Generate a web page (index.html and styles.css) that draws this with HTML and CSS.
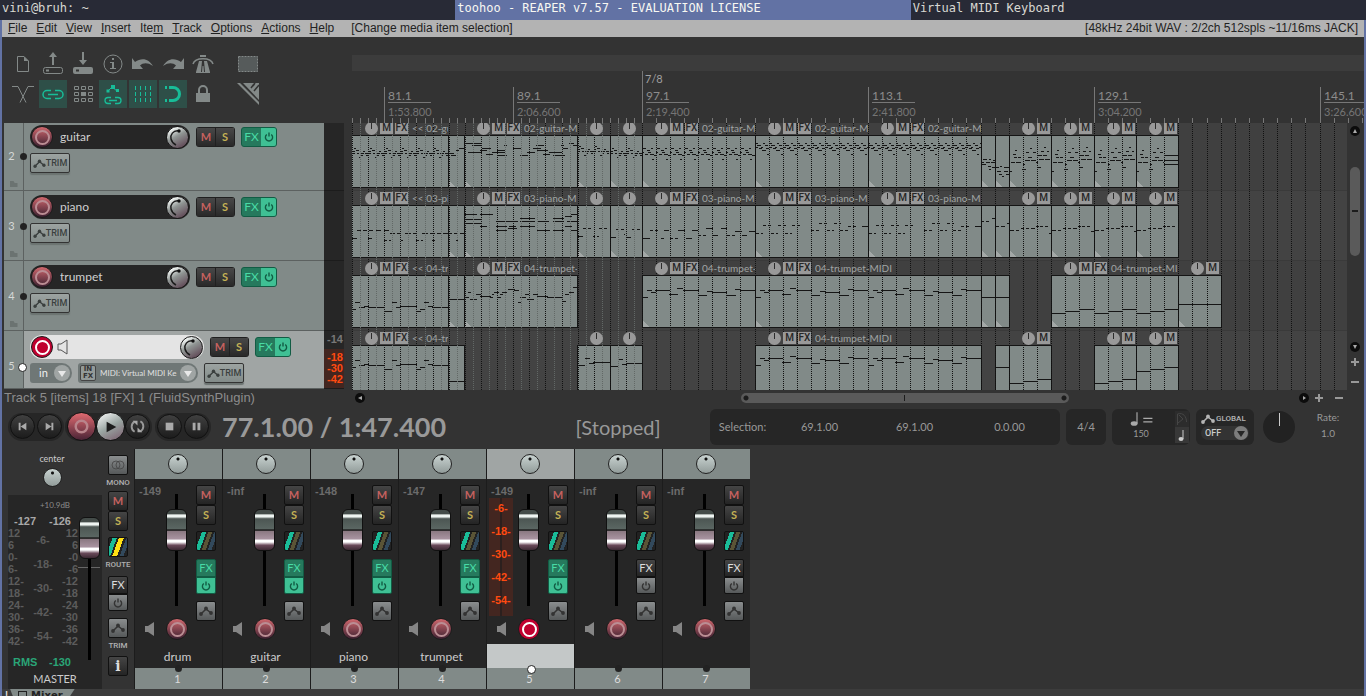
FILE: index.html
```html
<!DOCTYPE html>
<html lang="en">
<head>
<meta charset="utf-8">
<title>toohoo - REAPER v7.57 - EVALUATION LICENSE</title>
<link rel="stylesheet" href="styles.css">
</head>
<body>
<header class="wm-tabs">
  <span class="wm-tab">vini@bruh: ~</span>
  <span class="wm-tab wm-tab--active">toohoo - REAPER v7.57 - EVALUATION LICENSE</span>
  <span class="wm-tab">Virtual MIDI Keyboard</span>
</header>
<main class="app">
  <nav class="menubar">
    <a href="#file"><u>F</u>ile</a><a href="#edit"><u>E</u>dit</a><a href="#view"><u>V</u>iew</a><a href="#insert"><u>I</u>nsert</a><a href="#item">Ite<u>m</u></a><a href="#track"><u>T</u>rack</a><a href="#options"><u>O</u>ptions</a><a href="#actions"><u>A</u>ctions</a><a href="#help"><u>H</u>elp</a>
    <span class="menubar__action">[Change media item selection]</span>
    <span class="menubar__device">[48kHz 24bit WAV : 2/2ch 512spls ~11/16ms JACK]</span>
  </nav>

  <section class="upper">
    <div class="toolbar">
      <div class="toolbar__row">
        <button class="tool" aria-label="New project"><svg viewBox="0 0 28 28"><path d="M8.500 6.500h6.500l4.500 4.500v10.500h-11z" fill="none" stroke="currentColor"/><path d="M15 6.500v4.500h4.500z" fill="currentColor"/></svg></button>
        <button class="tool" aria-label="Open project"><svg viewBox="0 0 28 28"><rect x="4.500" y="17.500" width="19" height="6" rx="2" fill="none" stroke="currentColor"/><path d="M7 19.500h3v2h-3zM13 15V7h-3l4-5 4 5h-3v8z" fill="currentColor"/></svg></button>
        <button class="tool" aria-label="Save project"><svg viewBox="0 0 28 28"><rect x="4" y="17" width="20" height="7" rx="2" fill="currentColor"/><path d="M7 19.500h3v2h-3z" fill="#333"/><path d="M13 2h2v8h3l-4 5-4-5h3z" fill="currentColor"/></svg></button>
        <button class="tool" aria-label="Project settings"><svg viewBox="0 0 28 28"><circle cx="14" cy="14" r="9" fill="none" stroke="currentColor"/><path d="M13 8h2v2h-2zM11 12h4v6h2v1h-6v-1h2v-5h-2z" fill="currentColor"/></svg></button>
        <button class="tool" aria-label="Undo"><svg viewBox="0 0 28 28"><path d="M3 8l3 4c7-5 14-3 18 4-6-4-10-3-13-.5L14 19H3z" fill="currentColor"/></svg></button>
        <button class="tool" aria-label="Redo"><svg viewBox="0 0 28 28"><path d="M25 8l-3 4c-7-5-14-3-18 4 6-4 10-3 13-.5L14 19h11z" fill="currentColor"/></svg></button>
        <button class="tool" aria-label="Metronome"><svg viewBox="0 0 28 28"><path d="M11 5h6v2h-6zM10 11h3l-1 11h1l.5-6h1l.5 6h1l-1-11h3l3 11v1H7v-1z" fill="currentColor"/><path d="M4 14c2-7 18-7 20 0" fill="none" stroke="currentColor" stroke-width="1.500"/></svg></button>
        <button class="tool tool--apart" aria-label="Marquee selection"><svg viewBox="0 0 28 28"><rect x="4.500" y="6.500" width="19" height="15" fill="#565b5b" stroke="currentColor" stroke-dasharray="2 1"/></svg></button>
      </div>
      <div class="toolbar__row">
        <button class="tool" aria-label="Auto-crossfade"><svg viewBox="0 0 28 28"><path d="M3 6.500h6l8 16M25 6.500h-6l-8 16" fill="none" stroke="currentColor"/></svg></button>
        <button class="tool tool--on" aria-label="Item grouping"><svg viewBox="0 0 28 28"><path d="M12 10.500H8a4 4 0 0 0 0 8h4M16 10.500h4a4 4 0 0 1 0 8h-4M9 14.500h10" fill="none" stroke="currentColor" stroke-width="1.500"/></svg></button>
        <button class="tool" aria-label="Ripple editing"><svg viewBox="0 0 28 28"><g fill="none" stroke="currentColor"><path d="M5.500 6.500h4v3h-4zM12.500 6.500h4v3h-4zM19.500 6.500h4v3h-4zM5.500 12.500h4v3h-4zM19.500 12.500h4v3h-4zM5.500 18.500h4v3h-4zM12.500 18.500h4v3h-4zM19.500 18.500h4v3h-4z"/></g><path d="M12 12h5v4h-5z" fill="currentColor"/></svg></button>
        <button class="tool tool--on" aria-label="Move envelopes"><svg viewBox="0 0 28 28"><path d="M9 11l4-4 5 4" fill="none" stroke="currentColor"/><path d="M7.500 9.500h3v3h-3zM12 5h4v4h-4zM17 9h3v3h-3z" fill="currentColor"/><path d="M12 17.500H9a3 3 0 0 0 0 6h3M16 17.500h3a3 3 0 0 1 0 6h-3M10 20.500h8" fill="none" stroke="currentColor" stroke-width="1.300"/></svg></button>
        <button class="tool tool--on" aria-label="Grid lines"><svg viewBox="0 0 28 28"><path d="M6.500 6v16M11.500 6v16M16.500 6v16M21.500 6v16" stroke="currentColor" stroke-dasharray="4 2"/></svg></button>
        <button class="tool tool--on" aria-label="Snap"><svg viewBox="0 0 28 28"><path d="M10 7.500h4a6.500 6.500 0 0 1 0 13h-4" fill="none" stroke="currentColor" stroke-width="3"/><path d="M6 6h2v3H6zM6 19h2v3H6z" fill="currentColor"/></svg></button>
        <button class="tool" aria-label="Lock"><svg viewBox="0 0 28 28"><path d="M7 13h14v9H7z" fill="currentColor"/><path d="M10 13v-3a4 4 0 0 1 8 0v3" fill="none" stroke="currentColor" stroke-width="2"/></svg></button>
        <button class="tool tool--apart" aria-label="Item edit mode"><svg viewBox="0 0 28 28"><path d="M3 3l22 22v-3L6 3z" fill="currentColor"/><path d="M9 3h16v17z" fill="currentColor"/><path d="M17 8l3-4M20 11l5-6M21 3l-2 3" stroke="#333" stroke-width="1.500"/></svg></button>
      </div>
    </div>
    <div class="ruler">
      <div class="ruler__regions"></div>
      <div class="ruler__sig">7/8</div>
      <svg class="ruler__ticks" id="ticks" aria-hidden="true"></svg>
      <div id="marks"></div>
    </div>
  </section>

  <section class="middle">
    <div class="tcp" id="tcp"></div>
    <div class="arrange" id="arrange"></div>
    <div class="vscroll">
      <button class="round-btn" aria-label="Scroll up"><svg viewBox="0 0 10 10"><path d="M5 3l2 4H3z"/></svg></button>
      <div class="vscroll__track"><div class="vscroll__thumb"></div></div>
      <button class="round-btn" aria-label="Scroll down"><svg viewBox="0 0 10 10"><path d="M5 7l2-4H3z"/></svg></button>
      <button class="zoom-btn" aria-label="Zoom in vertically"><svg viewBox="0 0 8 8"><path d="M3 0h2v3h3v2H5v3H3V5H0V3h3z"/></svg></button>
      <button class="zoom-btn" aria-label="Zoom out vertically"><svg viewBox="0 0 8 8"><path d="M0 3h8v2H0z"/></svg></button>
    </div>
  </section>

  <section class="status">
    <p class="status__text">Track 5 [items] 18 [FX] 1 (FluidSynthPlugin)</p>
    <div class="hscroll">
      <button class="round-btn" aria-label="Scroll left"><svg viewBox="0 0 10 10"><path d="M3 5l4-2v4z"/></svg></button>
      <div class="hscroll__track"><div class="hscroll__thumb"></div></div>
      <button class="round-btn" aria-label="Scroll right"><svg viewBox="0 0 10 10"><path d="M7 5L4 3v4z"/></svg></button>
      <button class="zoom-btn" aria-label="Zoom in"><svg viewBox="0 0 8 8"><path d="M3 0h2v3h3v2H5v3H3V5H0V3h3z"/></svg></button>
      <button class="zoom-btn" aria-label="Zoom out"><svg viewBox="0 0 8 8"><path d="M0 3h8v2H0z"/></svg></button>
    </div>
  </section>

  <section class="transport">
    <div class="pill">
      <button class="tbtn" aria-label="Go to start"><svg viewBox="0 0 24 24"><path d="M8 8h2v8H8zM16 8v8l-6-4z"/></svg></button>
      <button class="tbtn" aria-label="Go to end"><svg viewBox="0 0 24 24"><path d="M14 8h2v8h-2zM8 8v8l6-4z"/></svg></button>
    </div>
    <div class="pill">
      <button class="tbtn tbtn--rec" aria-label="Record"><svg viewBox="0 0 28 28"><circle cx="14" cy="14" r="6" fill="none" stroke="#b9848b" stroke-width="2.500"/></svg></button>
      <button class="tbtn tbtn--play" aria-label="Play"><svg viewBox="0 0 28 28"><path d="M10 9v11l10-5.500z" fill="#1c1c1c"/></svg></button>
      <button class="tbtn" aria-label="Repeat"><svg viewBox="0 0 24 24"><path d="M9 17.500A6 6 0 0 1 9 7M15 6.500A6 6 0 0 1 15 17" fill="none" stroke="#999" stroke-width="2"/><path d="M7 6h5v5zM17 18h-5v-5z"/></svg></button>
    </div>
    <div class="pill">
      <button class="tbtn" aria-label="Stop"><svg viewBox="0 0 24 24"><path d="M8 8h8v8H8z"/></svg></button>
      <button class="tbtn" aria-label="Pause"><svg viewBox="0 0 24 24"><path d="M8 8h3v8H8zM13 8h3v8h-3z"/></svg></button>
    </div>
    <div class="transport__time">77.1.00 / 1:47.400</div>
    <div class="transport__state">[Stopped]</div>
    <div class="tbox tbox--selection"><span>Selection:</span><span>69.1.00</span><span>69.1.00</span><span>0.0.00</span></div>
    <div class="tbox tbox--sig">4/4</div>
    <div class="tbox tbox--tempo">
      <div class="tempo"><svg viewBox="0 0 24 14" class="tempo__note"><ellipse cx="6" cy="11" rx="3" ry="2"/><path d="M8 1h1v10H8zM14 6h8v1h-8zM14 9h8v1h-8z"/></svg><span>150</span></div>
      <div class="tempo__side"><svg viewBox="0 0 14 16"><path d="M2.500 14V3c6-2 9 3 9 8M3 12l5-4-4-4" fill="none" stroke="#454545"/></svg><svg viewBox="0 0 14 16" class="tempo__beat"><ellipse cx="6" cy="12" rx="2.500" ry="2"/><path d="M7.500 3h1v9h-1z"/></svg></div>
    </div>
    <div class="tbox tbox--global">
      <label class="global__label" for="global"><svg viewBox="0 0 14 10"><use href="#env"/></svg>GLOBAL</label>
      <span class="drop drop--off"><select id="global"><option>OFF</option></select></span>
    </div>
    <button class="rate-knob" aria-label="Play rate"></button>
    <div class="rate"><span>Rate:</span><span>1.0</span></div>
  </section>

  <section class="mixer" id="mixer">
    <div class="master">
      <div class="master__head"><span>center</span><button class="pan" aria-label="Master pan"></button></div>
      <div class="master__panel">
        <div class="master__gain">+10.9dB</div>
        <div class="master__body">
          <div class="master__meter">
            <div class="master__peaks"><b>-127</b><b>-126</b></div>
            <div class="master__scales">
              <ol><li>12</li><li>6</li><li>0-</li><li>6-</li><li>12-</li><li>18-</li><li>24-</li><li>30-</li><li>36-</li><li>42-</li></ol>
              <ol class="mid"><li>-6-</li><li>-18-</li><li>-30-</li><li>-42-</li><li>-54-</li></ol>
              <ol class="right"><li>12</li><li>6</li><li>-0</li><li>-6</li><li>-12</li><li>-18</li><li>-24</li><li>-30</li><li>-36</li><li>-42</li></ol>
            </div>
            <div class="master__rms"><b>RMS</b><b>-130</b></div>
          </div>
          <input class="fader fader--master" type="range" min="0" max="100" value="100" aria-label="Master volume">
        </div>
        <div class="master__name">MASTER</div>
      </div>
    </div>
    <div class="master-btns">
      <button class="sq sq--grey" aria-label="Mono"><svg viewBox="0 0 20 20"><g fill="none" stroke="#444"><circle cx="7.500" cy="10" r="5"/><circle cx="12.500" cy="10" r="5"/></g></svg></button>
      <span class="cond">MONO</span>
      <button class="sq m">M</button><button class="sq s">S</button>
      <button class="route route--live" aria-label="Route"></button>
      <span class="cond">ROUTE</span>
      <button class="sq fxo">FX</button><button class="sq sq--grey pw" aria-label="Bypass effects"><svg viewBox="0 0 12 12"><use href="#power"/></svg></button>
      <button class="sq sq--grey env" aria-label="Envelopes"><svg viewBox="0 0 14 10"><use href="#env"/></svg></button>
      <span class="cond">TRIM</span>
      <button class="sq info" aria-label="Information">i</button>
    </div>
  </section>
  <footer class="docker"><span class="docker__alert">!</span><span class="docker__tab"><i></i>Mixer</span></footer>
</main>

<svg class="defs" aria-hidden="true">
  <symbol id="env" viewBox="0 0 14 10"><path d="M2 8l5-5 5 4" fill="none" stroke="currentColor" stroke-width="1.500"/><circle cx="2" cy="8" r="1.900" fill="currentColor"/><circle cx="7" cy="2.500" r="1.900" fill="currentColor"/><circle cx="12" cy="7" r="1.900" fill="currentColor"/></symbol>
  <symbol id="power" viewBox="0 0 12 12"><path d="M3.800 3.500a3.600 3.600 0 1 0 4.400 0M6 1.500v4" fill="none" stroke="currentColor" stroke-width="1.400"/></symbol>
  <symbol id="speaker" viewBox="0 0 12 16"><path d="M1 5h3l6-4v14l-6-4H1z"/></symbol>
</svg>
<script src="app.js"></script>
</body>
</html>
```
FILE: styles.css
```css
* { box-sizing: border-box; }
:root {
  --bg: #333;
  --dark: #262626;
  --track: #818a88;
  --track-sel: #a0a5a4;
  --text: #999;
  --accent: #6272a4;
}
body {
  margin: 0;
  height: 100vh;
  overflow: hidden;
  display: flex;
  flex-direction: column;
  background: var(--bg);
  color: var(--text);
  font: 11px/14px Lato, sans-serif;
}
button { padding: 0; border: 0; background: none; font: inherit; color: inherit; display: block; }
svg { display: block; }
.defs { position: absolute; width: 0; height: 0; }
ol { list-style: none; margin: 0; padding: 0; }

.wm-tabs { display: grid; grid-template-columns: repeat(3, 1fr); flex: none; height: 20px; background: #282a36; }
.wm-tab { padding-left: 2px; font: 12px/17px "DejaVu Sans Mono", monospace; color: #d8d8d2; white-space: nowrap; }
.wm-tab--active { background: var(--accent); color: #f8f8f2; }

.app { flex: 1; min-height: 0; display: flex; flex-direction: column; border: solid var(--accent); border-width: 0 2px; overflow: hidden; }
.app > * { flex: none; }

.menubar { display: flex; gap: 9px; height: 17px; padding: 0 6px; background: #b3b3b3; font: 12px/16px "Liberation Sans", Arial, sans-serif; color: #222; }
.menubar a { color: inherit; text-decoration: none; }
.menubar__action { margin-left: 8px; }
.menubar__device { margin-left: auto; }

.upper { display: grid; grid-template-columns: 350px 1fr; height: 86px; }
.toolbar { display: flex; flex-direction: column; gap: 2px; padding: 13px 7px; }
.toolbar__row { display: flex; gap: 2px; }
.tool { width: 28px; height: 28px; color: #838988; }
.tool--on { background: #2e4f48; color: #18bd98; }
.tool--apart { margin-left: 15px; }

.ruler { position: relative; padding-top: 18px; overflow: hidden; }
.ruler__regions { height: 16px; background: #3c3c3c; }
.ruler__sig { position: absolute; left: 290px; top: 34px; height: 16px; padding-left: 2px; border-left: 1px solid #777; line-height: 16px; color: #a0a0a0; }
.ruler__ticks { position: absolute; left: 0; bottom: 0; width: 100%; height: 5px; }
.mark { position: absolute; top: 50px; height: 36px; padding-left: 3px; border-left: 1px solid #777; color: #8c8c8c; }
.mark b { display: block; width: 43px; height: 16px; border-bottom: 1px solid #777; font: 12px/18px Lato, sans-serif; }
.mark span { display: block; line-height: 18px; color: #757575; }

.middle { display: grid; grid-template-columns: 350px 1fr 17px; height: 267px; overflow: hidden; }
.tcp, .arrange { min-width: 0; overflow: hidden; padding-left: 2px; }
.arrange { padding-left: 0; }
.tcp > :first-child, .arrange > :first-child { margin-top: -2px; }

.track { display: grid; grid-template-columns: 20px 300px 20px; height: 70px; }
.track--sel { height: 58px; }
.track__gutter { position: relative; display: flex; flex-direction: column; align-items: center; justify-content: space-between; padding: 28px 4px 3px 0; background: var(--track); border: solid #5c6160; border-width: 0 1px 1px 0; color: #d5d8d7; }
.track__gutter::after { content: ""; position: absolute; right: -4px; top: 32px; width: 7px; height: 7px; border-radius: 50%; background: #222; z-index: 1; }
.track--sel .track__gutter::after { background: #fff; border: 1px solid #222; }
.track__gutter i { width: 8px; height: 6px; margin-left: 4px; background: #6b7371; clip-path: polygon(0 0, 50% 0, 65% 33%, 100% 33%, 100% 100%, 0 100%); }
.track--sel .track__gutter i { display: none; }
.track__main { padding: 4px 6px; background: var(--track); border-bottom: 1px solid #5c6160; display: flex; flex-direction: column; gap: 4px; }
.track--sel .track__main { background: var(--track-sel); }
.track__meter { background: var(--dark); border-bottom: 1px solid #1c1c1c; }
.track--sel .track__meter { background: linear-gradient(#262626 18px, #432620 18px); font: bold 11px/11px "Liberation Sans", Arial, sans-serif; text-align: right; color: #ff4a10; padding: 3px 1px 0 0; }
.track__meter span { display: block; }
.track__meter .peak { color: #777; margin-bottom: 7px; }

.row { display: flex; align-items: center; }
.namebox { display: flex; align-items: center; width: 160px; height: 24px; padding: 0 1px; border-radius: 12px; background: var(--dark); }
.track--sel .namebox { width: 174px; background: #e4e4e4; }
.namebox input { flex: 1; min-width: 0; margin: 0 0 0 7px; padding: 0; border: 0; background: none; font: 12px/16px Lato, sans-serif; color: #d0d0d0; outline: 0; }
.namebox > svg { margin-left: 4px; }
.rec { flex: none; width: 22px; height: 22px; border-radius: 50%; border: 1px solid #1c1c1c; background: linear-gradient(#d0686e, #3b2030); display: grid; place-items: center; }
.rec::after { content: ""; width: 11px; height: 11px; border-radius: 50%; border: 2px solid #bb8e94; }
.rec--armed { background: #c0002f; }
.rec--armed::after { border-color: #fff; }
.vol { flex: none; width: 23px; height: 23px; border-radius: 50%; border: 1px solid #181818; background: linear-gradient(150deg, #f2f6f4 15%, #8f9593 45%, #5f4755 90%); }
.ms { display: flex; margin-left: 6px; padding: 1px; border-radius: 3px; background: #202020; gap: 1px; }
.ms button { width: 18px; height: 18px; background: linear-gradient(#484848, #292929); font: bold 11px/18px Lato, sans-serif; }
.m, .ms .m { color: #c5615f; }
.s, .ms .s { color: #c3b155; }
.fx { display: flex; margin-left: 6px; height: 20px; border: 1px solid #125c44; border-radius: 3px; overflow: hidden; background: #26795d; }
.fx button:first-child { width: 19px; color: #48dba5; font: 12px/18px Lato, sans-serif; }
.fx .pw { width: 15px; background: #3fc094; color: #125c44; display: grid; place-items: center; }
.pw svg { width: 12px; height: 12px; }
.trim { display: flex; align-items: center; justify-content: center; width: 40px; height: 20px; border: 1px solid #333; border-radius: 2px; background: linear-gradient(#9ca3a1, #828b89); color: #3a3f3e; font: 500 9px/18px Roboto, sans-serif; box-shadow: 0 2px 1px #6b7371; }
.trim svg { flex: none; width: 13px; height: 9px; }
.inputs { display: flex; gap: 6px; }
.drop { position: relative; display: flex; align-items: center; height: 20px; border-radius: 3px 10px 10px 3px; background: #6f7776; color: #f0f0f0; }
.drop::after { content: ""; position: absolute; right: 2px; top: 2px; width: 16px; height: 16px; border-radius: 50%; background: #a0a5a4; pointer-events: none; }
.drop::before { content: ""; position: absolute; z-index: 1; right: 6px; top: 8px; border: 4px solid transparent; border-top: 6px solid #e8e8e8; border-bottom: 0; pointer-events: none; }
.drop select { appearance: none; border: 0; padding: 0 0 0 9px; background: none; color: inherit; font: 11px/20px Lato, sans-serif; width: 42px; height: 20px; }
.drop--midi select { width: 102px; padding-left: 4px; font-size: 8px; color: #e0e0e0; }
.infx { width: 16px; height: 16px; margin-left: 2px; border: 1px solid #444; border-radius: 2px; background: #939a98; color: #333; font: bold 7px/7px "DejaVu Sans", sans-serif; }
.drop--off { height: 14px; border-radius: 7px; background: #333; color: #ccc; width: 48px; }
.drop--off::after { width: 14px; height: 14px; top: 0; right: 1px; background: #7c7c7c; }
.drop--off::before { right: 4px; top: 5px; border-top-color: #262626; }
.drop--off select { padding-left: 4px; height: 14px; width: 48px; font: 500 9px/14px Roboto, sans-serif; }

.lane { position: relative; height: 70px; background: #404040; overflow: hidden; border-bottom: 1px solid #3a3a3a; }
.lane:nth-child(even) { background: #434343; }
.lane--sel { background: #515151; }
.lane > svg { width: 100%; height: 100%; shape-rendering: crispEdges; }
.item-head { position: absolute; top: 0; height: 14px; padding-left: 13px; display: flex; align-items: center; gap: 2px; overflow: hidden; white-space: nowrap; color: #a0a5a4; font-size: 10px; }
.item-head span { flex: 1; min-width: 0; overflow: hidden; padding-left: 2px; }
.item-head button { flex: none; width: 13px; height: 12px; background: #999; color: #262626; font: 500 10px/12px Roboto, sans-serif; }
.item-head .item-knob { height: 13px; border-radius: 50%; background: linear-gradient(#2c2c2c, #2c2c2c) 6px 1px / 1px 6px no-repeat #999; }
.item-body { fill: var(--track); }
.edge, .note { stroke: #151515; fill: none; }
.grid-bar { stroke: #111; stroke-dasharray: 1 1; }
.grid-half { stroke: #626866; stroke-dasharray: 1 1; }
.fade { fill: #a3a8a7; }

.round-btn { width: 10px; height: 10px; border-radius: 50%; background: #0c0c0c; fill: #aaa; }
.zoom-btn { width: 8px; height: 8px; fill: #999; }
.vscroll { display: flex; flex-direction: column; align-items: center; gap: 12px; padding: 3px 1px 4px 0; }
.vscroll__track { flex: 1; width: 10px; padding-top: 19px; }
.vscroll__thumb { height: 89px; border-radius: 5px; background: linear-gradient(#1c1c1c, #1c1c1c) 2px 43px / 6px 2px no-repeat #5a5a5a; }
.vscroll .round-btn + .zoom-btn { margin-top: -6px; }

.status { display: grid; grid-template-columns: 350px 1fr; height: 16px; }
.status__text { margin: 0; padding-left: 2px; font: 13px/15px "Liberation Sans", Arial, sans-serif; color: #8c8c8c; }
.hscroll { display: flex; align-items: center; gap: 12px; padding: 0 21px 0 3px; }
.hscroll .zoom-btn { margin-left: -6px; }
.hscroll .zoom-btn:last-child { margin-left: 0; }
.hscroll__track { flex: 1; }
.hscroll__thumb { width: 36%; height: 10px; margin-left: 40%; border-radius: 5px; background: radial-gradient(circle at 5px 5px, #1c1c1c 2px, transparent 3px), radial-gradient(circle at calc(100% - 5px) 5px, #1c1c1c 2px, transparent 3px), linear-gradient(#1c1c1c, #1c1c1c) 50% 50% / 1px 6px no-repeat #5a5a5a; }

.transport { display: flex; align-items: center; gap: 6px; height: 43px; padding: 0 9px 2px 6px; }
.pill { display: flex; align-items: center; height: 28px; padding: 0 2px; gap: 2px; border-radius: 14px; background: #262626; }
.pill + .pill { margin-left: -5px; gap: 0; }
.pill:nth-child(3) { margin-left: -3px; gap: 2px; }
.tbtn { width: 25px; height: 25px; border: 1px solid #111; border-radius: 50%; background: linear-gradient(#404040, #1c1c1c); fill: #aaa; }
.tbtn--rec { width: 29px; height: 29px; background: linear-gradient(#e06a70, #4a2436); }
.tbtn--play { width: 29px; height: 29px; background: linear-gradient(150deg, #fff, #9aa5a2 50%, #7a5c6c); }
.transport__time { margin-left: 5px; width: 240px; font: bold 27px/36px Lato, sans-serif; white-space: nowrap; }
.transport__state { flex: 1; text-align: center; font: 20px/32px Lato, sans-serif; padding-left: 64px; }
.tbox { height: 36px; border-radius: 6px; background: var(--dark); }
.tbox--selection { width: 350px; display: grid; grid-template-columns: 62px 95px 95px 95px; align-items: center; text-align: center; }
.tbox--selection span:first-child { padding-left: 3px; }
.tbox--sig { width: 40px; line-height: 36px; text-align: center; }
.tbox--tempo { width: 78px; display: flex; justify-content: flex-end; gap: 20px; padding: 2px 1px; }
.tempo { text-align: center; font: 9px/14px Lato, sans-serif; }
.tempo__note { width: 28px; height: 16px; fill: #aaa; }
.tempo__side svg { width: 14px; height: 16px; background: #2c2c2c; fill: #ccc; }
.tempo__side .tempo__beat { background: #383838; }
.tbox--global { width: 58px; padding: 3px 5px; }
.global__label { display: flex; align-items: center; gap: 1px; height: 14px; font: 500 8px/14px Roboto, sans-serif; color: #b5b5b5; }
.global__label svg { flex: none; width: 14px; height: 10px; }
.rate-knob { width: 32px; height: 32px; margin-left: 3px; border-radius: 50%; background: linear-gradient(#ccc, #ccc) 50% 2px / 1px 13px no-repeat #222; }
.rate { width: 54px; padding-bottom: 3px; display: flex; flex-direction: column; text-align: center; line-height: 16px; font-size: 10px; }

.mixer { display: flex; height: 240px; }
.master { width: 100px; padding-left: 6px; display: flex; flex-direction: column; }
.master__head { display: flex; flex-direction: column; align-items: center; height: 46px; padding: 4px 6px 0 0; gap: 3px; font: 9px/12px Lato, sans-serif; color: #ccc; }
.pan { width: 19px; height: 19px; border: 1px solid #222; border-radius: 50%; background: radial-gradient(circle at 50% 4px, #111 1px, transparent 2px), linear-gradient(#c8d2d0, #929c9a); }
.master__panel { flex: 1; display: flex; flex-direction: column; background: var(--dark); }
.master__gain { height: 22px; text-align: center; font: 8px/20px Lato, sans-serif; color: #8c8c8c; }
.master__body { display: flex; height: 152px; }
.master__meter { width: 70px; font: bold 10px/12px "Liberation Sans", Arial, sans-serif; color: #5c5c5c; }
.master__peaks { display: flex; justify-content: space-between; height: 10px; line-height: 8px; font-size: 11px; padding: 0 7px 0 6px; color: #a8a8a8; }
.master__scales { display: grid; grid-template-columns: 1fr 1fr 1fr; font-size: 11px; height: 124px; }
.master__scales .mid { padding-top: 7px; line-height: 24px; margin-top: -6px; text-align: center; }
.master__scales .right { text-align: right; }
.master__rms { display: flex; justify-content: space-between; margin-top: 4px; padding: 0 7px 0 5px; font-size: 11px; line-height: 14px; color: #2aa577; }
.master__name { text-align: center; line-height: 20px; color: #ccc; }
.master-btns { width: 32px; padding: 6px 6px 0; display: flex; flex-direction: column; align-items: center; }
.cond { font: 500 8px/16px Roboto, sans-serif; color: #b0b0b0; }
.sq { flex: none; width: 20px; height: 20px; border: 1px solid #111; border-radius: 2px; background: linear-gradient(#454545, #242424); font: bold 11px/18px Lato, sans-serif; }
.sq--grey { background: linear-gradient(#8a8d8e, #56595a); color: #333; display: grid; place-items: center; }
.sq--grey svg { width: 16px; height: 16px; }
.sq.env svg { width: 14px; height: 10px; }
.route { flex: none; width: 20px; height: 20px; border: 1px solid #111; border-radius: 2px; background: linear-gradient(110deg, #222 20%, #1abc98 20% 38%, #222 38% 46%, #5a5436 46% 62%, #222 62% 70%, #32495c 70% 86%, #222 86%); }
.route--live { background: linear-gradient(110deg, #222 14%, #1abc98 14% 32%, #222 32% 40%, #ffe014 40% 60%, #222 60% 70%, #32495c 70% 86%, #222 86%); margin-top: 6px; }
.sq.fxo { height: 18px; color: #ddd; font: 11px/16px Lato, sans-serif; border-radius: 2px 2px 0 0; }
.sq.pw { height: 17px; border-radius: 0 0 2px 2px; }
.sq.pw svg { width: 12px; height: 12px; }
.master-btns .fxo { margin-top: 3px; }
.master-btns .env { margin-top: 7px; }
.sq.info { font: bold 14px/18px "DejaVu Serif", serif; color: #ddd; margin-top: 2px; }

.strip { width: 88px; display: flex; flex-direction: column; background: var(--dark); border-left: 1px solid #1c1c1c; }
.strip__top { height: 30px; display: grid; place-items: center; padding-right: 2px; background: var(--track); }
.strip__top .pan { width: 20px; height: 20px; }
.strip__mid { flex: 1; display: flex; padding: 6px 6px 0 1px; }
.strip__left { flex: 1; }
.strip__peak { height: 130px; display: flex; }
.meter { width: 29px; font: bold 11px/13px "Liberation Sans", Arial, sans-serif; color: #6b6b6b; }
.meter > span { padding-left: 3px; white-space: nowrap; }
.meter ol { width: 24px; height: 118px; margin-left: 1px; padding-top: 4px; background: linear-gradient(90deg, #432620 11px, #2c201e 11px 13px, #432620 13px); color: #ff4a10; text-align: center; }
.meter li { height: 23px; }
.strip__rec { display: flex; align-items: center; height: 24px; gap: 10px; padding-left: 8px; margin-top: 2px; fill: #858585; }
.strip__rec svg { width: 12px; height: 16px; }
.strip__btns { width: 20px; display: flex; flex-direction: column; }
.strip__btns .route { margin: 6px 0 8px; }
.strip__btns .env { margin-top: 7px; }
.sq.fx-on { background: #26795d; border-color: #125c44; color: #48dba5; }
.sq.pw-on { background: #3fc094; border-color: #125c44; color: #125c44; }
.strip__name { height: 24px; padding-right: 2px; text-align: center; font: 12px/25px Lato, sans-serif; color: #ccc; }
.strip__num { position: relative; height: 21px; padding-right: 2px; line-height: 22px; text-align: center; background: var(--track); color: #ddd; }
.strip__num::before { content: ""; position: absolute; left: 50%; top: -3px; width: 7px; height: 7px; margin-left: -4px; border-radius: 50%; background: #222; }
.strip--sel .strip__top { background: var(--track-sel); }
.strip--sel .strip__name { background: #c4c8c8; }
.strip--sel .strip__num::before { background: #fff; border: 1px solid #222; }

.fader { appearance: none; writing-mode: vertical-lr; direction: rtl; width: 22px; height: 112px; margin: 9px 0 0; background: linear-gradient(#000, #000) 50% 0 / 3px 100% no-repeat; }
.fader--master { height: 143px; margin: 0; background: linear-gradient(#000, #000) 50% 0 / 3px 100% no-repeat, linear-gradient(#666, #666) 0 50px / 100% 1px no-repeat; }
.fader::-webkit-slider-thumb { appearance: none; width: 21px; height: 42px; border: 1px solid #111; border-radius: 6px; background: linear-gradient(#444c49 0 10%, #eef4f1 12% 17%, #4c5653 22%, #5b6763 48%, #222 49% 51%, #8b7982 53%, #a893a0 72%, #fff 76% 80%, #6a4a5a 88%, #3c2a34); }

.docker { display: flex; height: 20px; background: #3c3c3c; color: #ddd; }
.docker__alert { padding-left: 3px; font-weight: bold; line-height: 12px; }
.docker__tab { display: flex; gap: 4px; margin-left: 2px; padding: 0 12px 0 8px; background: var(--track); clip-path: polygon(0 0, 100% 0, 80% 100%, 12% 100%); font: bold 10px/13px "DejaVu Sans", sans-serif; color: #222; }
.docker__tab i { width: 9px; height: 9px; margin-top: 2px; border: 1px solid #222; }
```
FILE: app.js
```js
// Horizontal position of the first visible beat; all times below are in view pixels.
const ORIGIN = 352;
const VIEW_END = 2200;
const SIG_CHANGE = 642;

const MARKS = [[384, '81.1', '1:53.800'], [513, '89.1', '2:06.600'], [642, '97.1', '2:19.400'],
  [868, '113.1', '2:41.800'], [1094, '129.1', '3:04.200'], [1320, '145.1', '3:26.600']];

function gridLines() {
  const out = [];
  for (let i = 0; i < 36; i++) out.push([Math.round(352 + i * 8.06), i % 2 ? 'half' : 'bar']);
  for (let i = 0; SIG_CHANGE + i * 14.125 < VIEW_END; i++) out.push([Math.floor(SIG_CHANGE + i * 14.125), 'bar']);
  return out;
}
const GRID = gridLines();

// Repeats a motif of [dx, y, width] notes between two positions.
function loop(motif, from, to, period, dy = 0) {
  const out = [];
  for (let x = from; x < to - 1; x += period)
    motif.forEach(([dx, y, w]) => { if (x + dx < to) out.push([x + dx, y + dy, Math.min(w, to - x - dx)]); });
  return out;
}
// Parses "x-x2@y" tokens into notes.
const seq = (s, dx = 0, dy = 0) => s.trim().split(/\s+/).map(t => {
  const [, a, b, y] = t.match(/(\d+)-(\d+)@(\d+)/);
  return [+a + dx, +y + dy, b - a];
});

const RIFF = [[0, 32, 3], [1, 30, 2], [2, 27, 2], [4, 29, 3], [5, 32, 2], [7, 36, 2], [8, 32, 4], [9, 34, 2], [11, 30, 2], [13, 32, 3], [14, 34, 2]];
const RIFF7 = [[0, 31, 2], [1, 27, 3], [3, 33, 3], [5, 29, 3], [6, 31, 3], [8, 33, 4], [9, 27, 2], [10, 38, 2], [12, 34, 3]];
const HIGH7 = [[0, 26, 3], [1, 22, 2], [2, 24, 4], [4, 27, 3], [6, 26, 2], [7, 29, 4], [8, 22, 2], [10, 24, 3], [11, 27, 3], [12, 33, 2]];
const RISE = [[0, 50, 3], [2, 41, 4], [7, 41, 5], [4, 33, 3], [6, 29, 2], [5, 36, 3], [9, 36, 3],
  [13, 48, 4], [14, 43, 2], [16, 39, 5], [22, 39, 5], [17, 31, 3], [21, 27, 2], [19, 36, 4], [24, 31, 3],
  [28, 46, 4], [27, 41, 2], [30, 38, 5], [36, 38, 5], [29, 34, 4], [34, 34, 4], [32, 30, 3], [35, 26, 2], [38, 30, 2]];

const guitar = [
  ...loop(RIFF, 352, 448, 16),
  ...seq('448-454@32 451-456@34 456-459@29 459-464@27 464-481@22 472-482@24 482-491@27 480-487@29 497-505@29 537-548@29 468-482@31 492-505@31 527-535@31 549-562@31 486-493@33 543-550@33 497-507@34 520-528@34 553-565@34 513-521@27 533-541@27 563-568@27 504-507@24 536-544@24 561-564@24 573-577@24 569-574@22'),
  ...loop(RIFF, 577, 610, 16, -2), ...loop(RIFF, 610, 642, 16),
  ...loop(RIFF7, 642, 755, 14), ...loop(HIGH7, 755, 981, 14),
  ...seq('983-987@38 989-991@38 993-995@39 981-984@41 986-990@41 991-995@41 982-986@43 988-991@45 992-995@46 989-991@48 995-999@46 1000-1002@45 1004-1009@46 997-1001@50 1004-1008@50 999-1002@53 1006-1009@53 1002-1004@55'),
  ...loop(RISE, 1009, 1051, 42), ...loop(RISE, 1051, 1094, 43), ...loop(RISE, 1094, 1136, 42), ...loop(RISE, 1136, 1164, 42),
  ...seq('1164-1178@34 1164-1178@39 1164-1178@43')
];
const pianoVerse = '763-766@34 768-771@34 778-781@34 783-786@34 792-795@34 797-800@34 756-759@42 761-763@42 771-774@42 776-778@42 785-788@42 790-792@42 819-822@32 824-827@32 834-837@32 839-841@32 811-814@39 816-819@39 827-830@39 832-834@39 840-843@39 845-848@39 848-851@35 853-856@35 862-868@35';
const pianoRise = '1010-1014@39 1016-1019@39 1021-1024@37 1026-1029@37 1031-1035@37 1036-1039@35 1040-1043@35 1045-1048@35';
const piano = [
  ...seq('357-361@39 363-367@39 369-373@39 376-381@39 384-389@39 352-357@47 368-372@47 390-395@42 397-400@42 405-411@42 413-417@42 422-428@42 430-435@42 437-441@42 443-448@42 384-387@49 389-391@49 401-403@49 416-419@49 421-423@49 432-435@49 448-452@42 454-458@42 460-464@42 456-458@49'),
  ...seq('464-477@23 480-493@23 464-481@28 464-481@32 496-508@30 508-518@30 537-549@30 553-564@30 567-577@30 480-487@35 496-507@35 509-516@35 520-535@35 565-572@35 520-535@27 553-564@27 520-535@30 565-572@25 571-577@23 508-517@37 496-507@39 537-550@39 553-564@39 571-577@39'),
  ...seq('583-586@37 588-591@37 599-602@37 604-607@37 577-583@45 593-595@45 597-599@45 616-619@38 621-624@38 632-635@38 637-640@38 611-616@46 624-625@43 626-631@46'),
  ...seq('643-650@47 650-653@39 655-658@39 664-669@39 678-685@39 692-698@39 661-664@47 670-673@47 675-678@47 686-692@47 706-713@37 721-727@37 698-701@44 703-706@44 713-718@44 727-730@44 732-735@44 735-742@40 749-755@40 742-747@44'),
  ...seq(pianoVerse), ...seq(pianoVerse, 113),
  ...seq('981-984@30 986-989@30 992-995@27 995-999@35 1001-1005@35 1007-1009@32'),
  ...[0, 42, 85, 127].flatMap(d => seq(pianoRise, d)), ...seq('1049-1051@42 1091-1094@40 1134-1137@40')
];
const hornIntro = '352-356@48 355-360@41 359-365@46 364-369@45 368-384@46 384-393@50 392-397@41 396-401@46 400-417@45 416-421@50 420-425@48 424-429@41 428-433@45 432-448@46';
const hornVerse = '755-761@36 760-765@29 764-769@31 768-783@29 782-791@33 790-796@27 796-812@29 811-820@34 820-826@30 825-840@31 840-849@34 848-854@28 853-868@29';
const trumpet = [
  ...seq(hornIntro), ...seq('448-464@38'),
  ...seq('464-469@36 468-471@31 470-477@38 476-481@33 480-491@35 490-493@36 492-494@33 494-499@31 497-501@36 500-503@33 502-507@31 508-515@28 514-519@29 518-521@41 520-526@36 525-529@33 527-534@38 533-538@33 537-548@35 547-562@36 563-566@40 565-569@33 569-574@31 573-577@26'),
  ...seq(hornVerse, -113), ...seq(hornVerse), ...seq(hornVerse, 113), ...seq('981-1009@36'),
  ...[0, 43, 85].flatMap(d => seq('1051-1065@52 1065-1079@50 1079-1094@48', d)), ...seq('1178-1221@43')
];
const lead = [
  ...seq(hornIntro, 0, -12), ...seq('448-464@50 577-585@34 585-590@27 589-594@32 593-610@31 610-618@35 618-623@28 622-627@33 626-642@32'),
  ...seq(hornVerse, 0, -2), ...seq(hornVerse, 113, -2),
  ...seq('995-1009@36 1009-1023@52 1023-1037@50 1037-1051@48 1094-1108@52 1108-1122@50 1122-1136@48 1136-1150@40 1150-1164@38 1164-1178@36')
];

const standardItems = label => [
  [352, 448, '<< ' + label], [448, 464], [464, 577, label], [577, 610], [610, 642], [642, 755, label], [755, 868, label],
  [868, 981, label], [981, 995], [995, 1009], [1009, 1051], [1051, 1094], [1094, 1136], [1136, 1178]];

const TRACKS = [
  { n: 2, name: 'guitar', notes: guitar, items: standardItems('02-guitar-MIDI') },
  { n: 3, name: 'piano', notes: piano, items: standardItems('03-piano-MIDI') },
  { n: 4, name: 'trumpet', notes: trumpet, items: [[352, 448, '<< 04-trumpet'], [448, 464], [464, 577, '04-trumpet-MIDI'], [642, 755, '04-trumpet-MIDI'],
    [755, 981, '04-trumpet-MIDI'], [981, 995], [995, 1009], [1051, 1178, '04-trumpet-MIDI'], [1178, 1221]] },
  { n: 5, name: '', sel: true, notes: lead, items: [[352, 448, '<< 04-trumpet'], [448, 464], [577, 610], [610, 642], [755, 981, '04-trumpet-MIDI'],
    [995, 1009], [1009, 1051], [1094, 1136], [1136, 1178]] }
];

function laneHTML(t) {
  const bodies = t.items.map(([a, b], i) =>
    `<rect class="item-body" x="${a}" y="15" width="${b - a}" height="52"/>` +
    `<path class="edge" d="M${a} 14.5H${b}M${a} 66.5H${b}M${b + .5} 14V67${i ? `M${a + .5} 14V67` : ''}"/>` +
    (i && !t.sel ? `<path class="fade" d="M${a + 1} 60l6 6h-6z"/>` : '')).join('');
  const notes = `<path class="note" d="${t.notes.map(([x, y, w]) => `M${x} ${y + .5}h${w}`).join('')}"/>`;
  const grid = GRID.map(([x, k]) => `<path class="grid-${k}" d="M${x + .5} 0V70"/>`).join('');
  const heads = t.items.filter(([a, b]) => b - a >= 30).map(([a, b, label]) => {
    const w = b - a;
    return `<div class="item-head" style="left:${a - ORIGIN}px;width:${w}px"><button class="item-knob" aria-label="Item volume"></button>` +
      (w >= 40 ? '<button>M</button>' : '') +
      (label ? `<button>FX</button><span>${label.replace('<<', '&lt;&lt;')}</span>` : '') + '</div>';
  }).join('');
  return `<div class="lane${t.sel ? ' lane--sel' : ''}"><svg aria-hidden="true"><g transform="translate(${-ORIGIN} 0)">${bodies}${notes}${grid}</g></svg>${heads}</div>`;
}

const POWER = '<svg viewBox="0 0 12 12"><use href="#power"/></svg>';
const ENV = '<svg viewBox="0 0 14 10"><use href="#env"/></svg>';
const KNOB = '<button class="vol" aria-label="Volume"><svg viewBox="0 0 21 21"><path d="M12 4C6 3 3 8 4 12s3 5 5 6" fill="none" stroke="#1c1c1c" stroke-width="1.5"/><circle cx="12" cy="4" r="1.700" fill="#111"/></svg></button>';

function trackHTML(t) {
  const trim = `<button class="trim">${ENV}TRIM</button>`;
  const second = t.sel
    ? `<div class="inputs"><span class="drop"><select aria-label="Input"><option>in</option></select></span>
       <span class="drop drop--midi"><button class="infx">IN<br>FX</button><select aria-label="Record input"><option>MIDI: Virtual MIDI Ke</option></select></span>${trim}</div>`
    : trim;
  const spk = t.sel ? '<svg width="12" height="16" viewBox="0 0 12 16" fill="none" stroke="#555"><use href="#speaker"/></svg>' : '';
  const meter = t.sel ? '<span class="peak">-14</span><span>-18</span><span>-30</span><span>-42</span>' : '';
  return `<div class="track${t.sel ? ' track--sel' : ''}">
    <div class="track__gutter"><span>${t.n}</span><i></i></div>
    <div class="track__main"><div class="row"><div class="namebox"><button class="rec${t.sel ? ' rec--armed' : ''}" aria-label="Record arm"></button>${spk}<input value="${t.name}" aria-label="Track name">${KNOB}</div>
      <div class="ms"><button class="m">M</button><button class="s">S</button></div>
      <div class="fx"><button>FX</button><button class="pw" aria-label="Bypass effects">${POWER}</button></div></div>${second}</div>
    <div class="track__meter">${meter}</div></div>`;
}

const STRIPS = [['drum', '-149', 1], ['guitar', '-inf', 1], ['piano', '-148', 1], ['trumpet', '-147', 1], ['', '-149', 1, 1], ['', '-inf', 0], ['', '-inf', 0]];

function stripHTML([name, peak, fx, sel], i) {
  const scale = sel ? '<ol><li>-6-</li><li>-18-</li><li>-30-</li><li>-42-</li><li>-54-</li></ol>' : '';
  return `<div class="strip${sel ? ' strip--sel' : ''}">
    <div class="strip__top"><button class="pan" aria-label="Pan"></button></div>
    <div class="strip__mid"><div class="strip__left">
      <div class="strip__peak"><div class="meter"><span>${peak}</span>${scale}</div><input class="fader" type="range" min="0" max="100" value="78" aria-label="Volume, track ${i + 1}"></div>
      <div class="strip__rec"><svg viewBox="0 0 12 16"><use href="#speaker"/></svg><button class="rec${sel ? ' rec--armed' : ''}" aria-label="Record arm"></button></div></div>
      <div class="strip__btns"><button class="sq m">M</button><button class="sq s">S</button><button class="route" aria-label="Route"></button>
        <button class="sq fxo${fx ? ' fx-on' : ''}">FX</button><button class="sq sq--grey pw${fx ? ' pw-on' : ''}" aria-label="Bypass effects">${POWER}</button>
        <button class="sq sq--grey env" aria-label="Envelopes">${ENV}</button></div></div>
    <div class="strip__name">${name}</div><div class="strip__num">${i + 1}</div></div>`;
}

document.getElementById('ticks').innerHTML = GRID.map(([x]) => `<rect x="${x - ORIGIN}" width="1" height="5" fill="#777"/>`).join('');
document.getElementById('marks').innerHTML = MARKS.map(([x, bar, time]) =>
  `<div class="mark" style="left:${x - ORIGIN}px"><b>${bar}</b><span>${time}</span></div>`).join('');
document.getElementById('tcp').innerHTML = TRACKS.map(trackHTML).join('');
document.getElementById('arrange').innerHTML = TRACKS.map(laneHTML).join('');
document.getElementById('mixer').insertAdjacentHTML('beforeend', STRIPS.map(stripHTML).join(''));
```
